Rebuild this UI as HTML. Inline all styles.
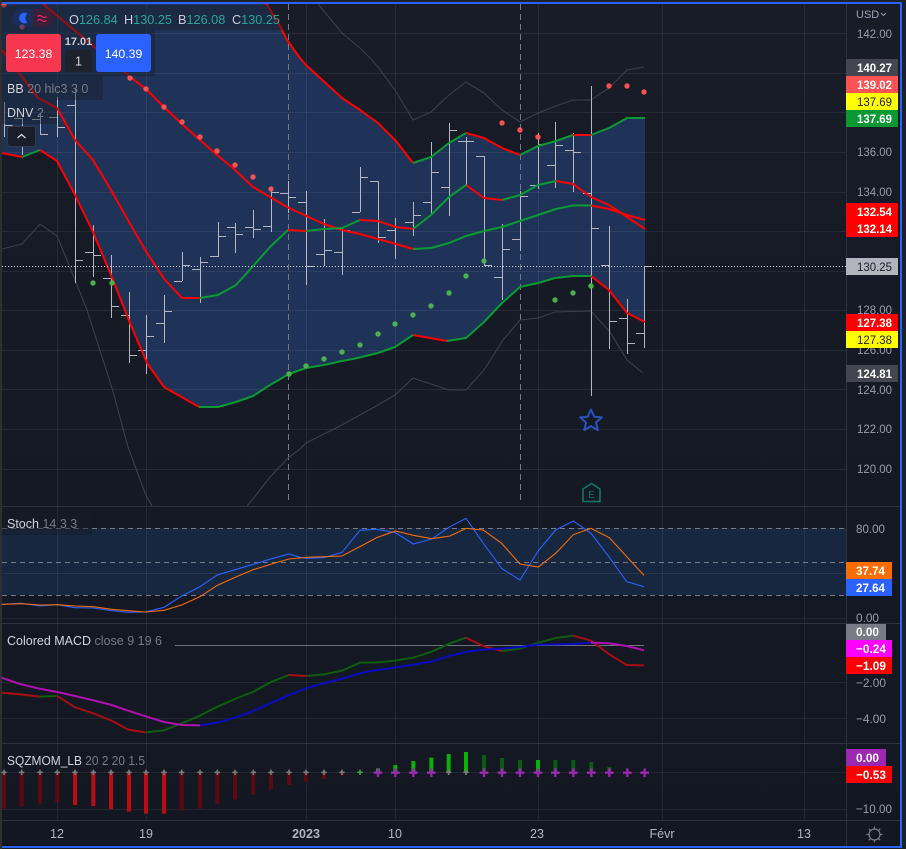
<!DOCTYPE html>
<html><head><meta charset="utf-8"><title>Chart</title>
<style>
html,body{margin:0;padding:0;background:#1d2026;width:906px;height:849px;overflow:hidden}
svg{display:block}
text{font-family:"Liberation Sans",sans-serif}
.ax{font-size:12.4px;fill:#9a9da6}
.lb{font-size:12.4px;fill:#fff;font-weight:bold}
.ti{font-size:12.5px;fill:#b2b5be;text-anchor:middle}
.le{font-size:12.5px;fill:#787b86}
.le tspan{fill:#d1d4dc}
</style></head><body>
<svg width="906" height="849" viewBox="0 0 906 849" xmlns="http://www.w3.org/2000/svg">
<defs><linearGradient id="bg" x1="0" y1="0" x2="0" y2="1"><stop offset="0" stop-color="#181c27"/><stop offset="1" stop-color="#131722"/></linearGradient></defs>
<rect x="0" y="0" width="906" height="849" fill="#1d2026"/>
<rect x="0" y="0" width="2" height="849" fill="#2d2f30"/>
<rect x="2" y="3" width="898" height="844" fill="url(#bg)"/>

<!-- main band fill -->
<polygon fill="#1f3359" points="2,4 266,4 280,26 287,40 300,58 306,65 342,98 360,110 378,123 396,141 413,163 431,157 449,143 466,133 484,138 502,148 520,155 538,146 556,141 573,135 591,135 609,128 627,118 645,118 645,322 627,313 609,290 591,276 573,276 555,278 538,283 520,287 502,303 484,322 466,338 447,341 413,335 395,347 378,353 353,359 342,361 324,365 306,368 289,374 270,385 253,396 236,402 218,407 199,407 164,387 147,363 130,323 111,275 93,232 75,195 57,161 40,150 22,157 2,153"/>
<!-- stoch band -->
<rect x="2" y="528" width="844" height="67" fill="#182740"/>

<!-- grid -->
<g stroke="#fff" stroke-opacity=".065" stroke-width="1" shape-rendering="crispEdges">
<path d="M2 33.5H846M2 73.5H846M2 112.5H846M2 152.5H846M2 192.5H846M2 231.5H846M2 271.5H846M2 310.5H846M2 350.5H846M2 389.5H846M2 429.5H846M2 469.5H846"/>
<path d="M2 573.5H846M2 618.5H846M2 682.5H846M2 718.5H846M2 772.5H846M2 809.5H846"/>
<path d="M57.5 4V820M146.5 4V820M306.5 4V820M395.5 4V820M538.5 4V820M662.5 4V820M804.5 4V820"/>
</g>
<!-- separators -->
<g stroke="#2e323d" stroke-width="1" shape-rendering="crispEdges">
<path d="M2 506.5H900M2 623.5H900M2 743.5H900M2 820.5H900M846.5 4V846"/>
</g>

<!-- session dashed verticals -->
<path d="M288.5 4V502M520.5 4V502" stroke="#787b86" stroke-width="1" stroke-dasharray="6 4" fill="none" shape-rendering="crispEdges"/>

<!-- outer thin gray lines -->
<g fill="none" stroke="#3c3f4a" stroke-width="1.1">
<polyline points="318,4 342,33 360,48 372,60 378,67 395,90 413,120 431,112 449,95 466,82 484,93 502,110 520,122 538,113 556,106 573,100 591,100 609,88 627,70 644,67"/>
<polyline points="2,249 22,244 40,224 57,236 67,260 87,310 112,388 128,447 145,493 152,506"/>
<polyline points="247,506 253,499 270,477 288,458 300,449 306,443 342,425 378,405 395,395 413,378 431,384 449,390 466,390 484,370 503,340 520,320 538,318 555,312 591,311 610,332 627,360 643,373"/>
</g>

<!-- bars -->
<path fill="none" stroke="#b4b7c0" stroke-width="1" shape-rendering="crispEdges" d="
M4.5 102V137M4.5 125.5h8
M22.5 118V155M14 118.5h8M22 128.5h8
M40.5 113V135M32 119.5h8M40 134.5h8
M57.5 97V137M49 117.5h8M57 127.5h8
M75.5 88V283M67 105.5h8M75 260.5h8
M93.5 225V277M85 252.5h8M93 255.5h8
M111.5 255V318M103 278.5h8M111 306.5h8
M129.5 292V363M121 315.5h8M129 355.5h8
M146.5 315V374M138 350.5h8M146 336.5h8
M164.5 295V343M156 323.5h8M164 311.5h8
M182.5 252V281M174 281.5h8M182 265.5h8
M200.5 257V303M192 269.5h8M200 262.5h8
M218.5 222V257M210 256.5h8M218 236.5h8
M235.5 223V253M227 227.5h8M235 234.5h8
M253.5 210V238M245 227.5h8M253 229.5h8
M271.5 187V232M263 226.5h8M271 192.5h8
M288.5 181V213M280 193.5h8M288 197.5h8
M306.5 191V285M298 202.5h8M306 266.5h8
M324.5 219V266M316 254.5h8M324 250.5h8
M342.5 228V275M334 252.5h8M342 230.5h8
M360.5 167V212M352 212.5h8M360 177.5h8
M378.5 181V243M370 181.5h8M378 237.5h8
M395.5 218V259M387 230.5h8M395 227.5h8
M413.5 202V236M405 222.5h8M413 215.5h8
M431.5 142V215M423 202.5h8M431 172.5h8
M449.5 123V216M441 187.5h8M449 130.5h8
M466.5 137V185M458 141.5h8M466 141.5h8
M484.5 156V266M476 156.5h8M484 265.5h8
M502.5 224V300M494 277.5h8M502 249.5h8
M520.5 191V251M512 239.5h8M520 196.5h8
M538.5 133V189M530 185.5h8M538 144.5h8
M555.5 122V188M547 165.5h8M555 145.5h8
M573.5 133V192M565 150.5h8M573 152.5h8
M591.5 86V396M583 193.5h8M591 228.5h8
M609.5 226V349M601 265.5h8M609 321.5h8
M627.5 299V354M619 318.5h8M627 343.5h8
M644.5 266V348M636 333.5h8M644 266.5h8"/>

<!-- coloured band lines -->
<g fill="none" stroke-width="2" stroke-linejoin="round">
<g stroke="#f00">
<polyline points="266,3 280,26 287,40 300,58 306,65 342,98 360,110 378,123 396,141 413,163"/>
<polyline points="466,133 484,138 502,148 520,155"/>
<polyline points="573,135 591,135"/>
<polyline points="43,4 128,75 147,90 165,108 183,125 200,140 217,155 233,168 253,187 270,197 287,207 300,213 324,224 342,230 360,234 378,239 396,244 413,249"/>
<polyline points="591,205.5 609,209 627,215 645,220"/>
<polyline points="2,50 38,98 57,108 75,140 93,160 111,190 129,222 147,253 165,280 182,298 200,298"/>
<polyline points="288,230 306,231"/>
<polyline points="360,220 378,221 396,227 413,229"/>
<polyline points="466,185 484,198 502,200"/>
<polyline points="556,181 573,184 591,197 609,205 627,217 645,229"/>
<polyline points="2,153 22,157"/>
<polyline points="40,150 57,161 75,195 93,232 111,275 130,323 147,363 164,387 199,407"/>
<polyline points="413,335 447,341"/>
<polyline points="591,276 609,290 627,313 645,322"/>
</g>
<g stroke="#0a9a32">
<polyline points="413,163 431,157 449,143 466,133"/>
<polyline points="520,155 538,146 556,141 573,135"/>
<polyline points="591,135 609,128 627,118 645,118"/>
<polyline points="413,249 431,248 449,243 466,236 484,231 502,227 520,221 538,215 556,209 573,205.5 591,205.5"/>
<polyline points="200,298 218,295 236,285 254,265 270,247 288,230"/>
<polyline points="306,231 324,229 342,228 360,220"/>
<polyline points="413,229 431,215 449,197 466,185"/>
<polyline points="502,200 520,195 538,185 556,181"/>
<polyline points="22,157 40,150"/>
<polyline points="199,407 218,407 236,402 253,396 270,385 289,374 306,368 324,365 342,361 353,359 378,353 395,347 413,335"/>
<polyline points="447,341 466,338 484,322 502,303 520,287 538,283 555,278 573,276 591,276"/>
</g>
</g>

<!-- dots -->
<g fill="#f55" opacity=".95">
<circle cx="4" cy="5" r="2.7"/><circle cx="130" cy="78" r="2.7"/><circle cx="146" cy="89" r="2.7"/><circle cx="164" cy="107" r="2.7"/><circle cx="182" cy="122" r="2.7"/><circle cx="200" cy="137" r="2.7"/><circle cx="217" cy="151" r="2.7"/><circle cx="235" cy="165" r="2.7"/><circle cx="253" cy="177" r="2.7"/><circle cx="271" cy="189" r="2.7"/><circle cx="502" cy="123" r="2.7"/><circle cx="520" cy="130" r="2.7"/><circle cx="538" cy="137" r="2.7"/><circle cx="609" cy="86" r="2.7"/><circle cx="627" cy="86" r="2.7"/><circle cx="644" cy="92" r="2.7"/>
</g>
<g fill="#4caf50">
<circle cx="93" cy="283" r="2.7"/><circle cx="112" cy="283" r="2.7"/><circle cx="289" cy="374" r="2.7"/><circle cx="306" cy="366" r="2.7"/><circle cx="324" cy="359" r="2.7"/><circle cx="342" cy="352" r="2.7"/><circle cx="360" cy="345" r="2.7"/><circle cx="378" cy="334" r="2.7"/><circle cx="395" cy="324" r="2.7"/><circle cx="413" cy="315" r="2.7"/><circle cx="431" cy="306" r="2.7"/><circle cx="449" cy="293" r="2.7"/><circle cx="466" cy="276" r="2.7"/><circle cx="484" cy="261" r="2.7"/><circle cx="555" cy="300" r="2.7"/><circle cx="573" cy="293" r="2.7"/><circle cx="591" cy="286" r="2.7"/>
</g>

<!-- last price dotted -->
<path d="M2 266.5H846" stroke="#d1d4dc" stroke-width="1" stroke-dasharray="1 2" shape-rendering="crispEdges"/>

<!-- star and E -->
<path d="M591 409.5l3.2 7.2 7.6.7-5.8 5.1 1.8 7.6-6.8-4-6.8 4 1.8-7.6-5.8-5.1 7.6-.7z" fill="none" stroke="#2a52be" stroke-width="2" stroke-linejoin="round"/>
<path d="M591.5 483.5l8.5 5.5v12.5h-17V489z" fill="none" stroke="#0b7a6a" stroke-width="1.6" stroke-linejoin="round"/>
<text x="591.5" y="498" font-size="10" fill="#0b7a6a" text-anchor="middle">E</text>

<!-- stoch -->
<path d="M2 528.5H846M2 562.5H846M2 595.5H846" stroke="#787b86" stroke-width="1" stroke-dasharray="5 4" shape-rendering="crispEdges" fill="none"/>
<g transform="translate(0,500) scale(.33333)" fill="none" stroke-width="3.3">
<polyline stroke="#2962ff" points="5,313 65,310 120,318 172,314 225,323 280,324 335,332 385,337 437,336 492,322 545,288 600,260 652,225 705,209 760,193 815,176 867,162 900,172 920,175 972,173 1026,157 1080,91 1130,88 1186,98 1240,132 1295,117 1350,80 1398,55 1450,130 1505,205 1560,240 1615,152 1667,90 1720,63 1773,100 1828,172 1880,245 1932,260"/>
<polyline stroke="#f56c0a" points="5,313 65,311 120,315 172,314 225,318 280,320 335,328 385,332 437,336 492,331 545,315 600,290 652,256 705,232 760,209 815,192 867,177 920,172 972,170 1026,168 1080,140 1130,113 1186,93 1240,106 1295,116 1350,108 1398,85 1450,90 1505,130 1560,192 1615,201 1667,160 1720,104 1773,85 1828,113 1880,170 1932,226"/>
</g>

<!-- MACD -->
<path d="M175 645.5H644" stroke="#6f727d" stroke-width="1" shape-rendering="crispEdges"/>
<g transform="translate(0,500) scale(.33333)" fill="none" stroke-width="6" stroke-linejoin="round">
<g stroke="#0d5f0d">
<polyline points="118,590 172,588"/>
<polyline points="437,697 492,691 545,670 600,647 652,620 705,597 760,575 815,545 867,525"/>
<polyline points="920,528 972,523 1026,512 1080,488 1130,487 1186,482 1240,473 1295,455 1350,430 1398,413"/>
<polyline points="1505,453 1560,446 1615,428 1667,414 1720,407"/>
</g>
<g stroke="#a80d14">
<polyline points="5,578 60,583 118,590"/>
<polyline points="172,588 225,622 280,640 335,662 385,689 437,697"/>
<polyline points="867,525 920,528"/>
<polyline points="1398,413 1450,438 1505,453"/>
<polyline points="1720,407 1773,422 1828,463 1880,495 1932,496"/>
</g>
<g stroke="#0a0ac4">
<polyline points="600,676 652,668 705,653 760,633 815,608 867,585 920,564 972,550 1026,536 1080,520 1130,510 1186,503 1240,494 1295,485 1350,467 1398,456 1450,449 1505,446 1560,441 1615,434 1667,433 1720,432 1773,428"/>
</g>
<g stroke="#b010b0">
<polyline points="5,533 60,552 118,566 172,576 225,588 280,601 335,615 385,632 437,649 492,666 545,675 600,676"/>
<polyline points="1773,428 1828,430 1880,438 1932,451"/>
</g>
</g>

<!-- squeeze histogram -->
<g transform="translate(0,500) scale(.33333)" fill="none">
<path stroke-width="12" stroke="#5c0a10" d="M12 817V926M65 817V920M120 817V911M172 817V908M545 817V932M600 817V926M652 817V911M705 817V899M760 817V885M813 817V869M867 817V855M918 817V845M972 817V837M1026 817V827"/>
<path stroke-width="12" stroke="#b80d12" d="M225 817V915M280 817V918M333 817V927M387 817V935M438 817V941M492 817V941"/>
<path stroke-width="12" stroke="#0bb00b" d="M1134 817V805M1186 817V795M1240 817V783M1294 817V773M1346 817V762M1398 817V756M1614 817V780"/>
<path stroke-width="12" stroke="#0a5c14" d="M1452 817V765M1506 817V774M1560 817V780M1666 817V780M1720 817V780M1774 817V786M1828 817V801"/>
<path stroke-width="5" stroke="#7a7a7a" d="M12 809V825M4 817H20M65 809V825M57 817H73M120 809V825M112 817H128M172 809V825M164 817H180M225 809V825M217 817H233M280 809V825M272 817H288M333 809V825M325 817H341M387 809V825M379 817H395M438 809V825M430 817H446M492 809V825M484 817H500M545 809V825M537 817H553M600 809V825M592 817H608M652 809V825M644 817H660M705 809V825M697 817H713M760 809V825M752 817H768M813 809V825M805 817H821M867 809V825M859 817H875M918 809V825M910 817H926M972 809V825M964 817H980M1026 809V825M1018 817H1034M1346 809V825M1338 817H1354M1398 809V825M1390 817H1406"/>
<path stroke-width="5" stroke="#43a047" d="M1080 809V825M1072 817H1088"/>
<path stroke-width="7" stroke="#9c27b0" d="M1134 805V831M1121 818H1147M1186 805V831M1173 818H1199M1240 805V831M1227 818H1253M1294 805V831M1281 818H1307M1452 805V831M1439 818H1465M1506 805V831M1493 818H1519M1560 805V831M1547 818H1573M1614 805V831M1601 818H1627M1666 805V831M1653 818H1679M1720 805V831M1707 818H1733M1774 805V831M1761 818H1787M1828 805V831M1815 818H1841M1882 805V831M1869 818H1895M1934 805V831M1921 818H1947"/>
</g>

<!-- legend backgrounds -->
<g fill="#181c27" fill-opacity=".42">
<rect x="2" y="5" width="284" height="25"/>
<rect x="2" y="30" width="153" height="46"/>
<rect x="2" y="76" width="101" height="24"/>
<rect x="2" y="100" width="55" height="24"/>
<rect x="2" y="513" width="90" height="22"/>
</g>

<!-- toggle -->
<path d="M33 9H22a9 9 0 0 0 0 18H33z" fill="#1a2d5b"/>
<path d="M33 9H44a9 9 0 0 1 0 18H33z" fill="#3a2138"/>
<path d="M27.5 13.5a5.4 5.4 0 1 0 0 9a6 6 0 0 1 0-9z" fill="#2962ff"/>
<path d="M37.5 16.5q2.2-2 4.5 0t4.5 0M37.5 20.5q2.2-2 4.5 0t4.5 0" fill="none" stroke="#e91e63" stroke-width="1.3"/>
<circle cx="22" cy="27" r="2.6" fill="#f55" opacity=".4"/>

<!-- OHLC -->
<g font-size="12.7">
<text x="69" y="24" fill="#c9ccd4">O<tspan fill="#26a69a">126.84</tspan></text>
<text x="124" y="24" fill="#c9ccd4">H<tspan fill="#26a69a">130.25</tspan></text>
<text x="178" y="24" fill="#c9ccd4">B<tspan fill="#26a69a">126.08</tspan></text>
<text x="232" y="24" fill="#c9ccd4">C<tspan fill="#26a69a">130.25</tspan></text>
</g>

<!-- buy/sell -->
<rect x="6" y="34" width="55" height="38" rx="3" fill="#f7374f"/>
<text x="33.5" y="58" font-size="12.3" fill="#fff" text-anchor="middle">123.38</text>
<rect x="96" y="34" width="55" height="38" rx="3" fill="#2962ff"/>
<text x="123.5" y="58" font-size="12.3" fill="#fff" text-anchor="middle">140.39</text>
<text x="78.5" y="45" font-size="11" fill="#c9ccd4" font-weight="bold" text-anchor="middle">17.01</text>
<rect x="65" y="50" width="27" height="22" rx="3" fill="#1e222d"/>
<text x="78.5" y="65.5" font-size="12.5" fill="#d1d4dc" text-anchor="middle">1</text>

<!-- legends -->
<text class="le" x="7" y="93"><tspan>BB</tspan> 20 hlc3 3 0</text>
<text class="le" x="7" y="117"><tspan>DNV</tspan> 2</text>
<rect x="7.5" y="126.5" width="28" height="20" rx="3" fill="#1a1e2a" stroke="#363a45"/>
<path d="M17.5 138l4-3.5 4 3.5" fill="none" stroke="#d1d4dc" stroke-width="1.3"/>
<text class="le" x="7" y="528"><tspan>Stoch</tspan> 14 3 3</text>
<text class="le" x="7" y="645"><tspan>Colored MACD</tspan> close 9 19 6</text>
<text class="le" x="7" y="765" textLength="138" lengthAdjust="spacingAndGlyphs"><tspan>SQZMOM_LB</tspan> 20 2 20 1.5</text>

<!-- axis -->
<text x="856" y="18" font-size="11" fill="#9aa3b5">USD</text>
<path d="M881 13l2.5 2.5 2.5-2.5" fill="none" stroke="#9598a1" stroke-width="1"/>
<g>
<text class="ax" x="857" y="38" textLength="35" lengthAdjust="spacingAndGlyphs">142.00</text>
<text class="ax" x="857" y="156" textLength="35" lengthAdjust="spacingAndGlyphs">136.00</text>
<text class="ax" x="857" y="196" textLength="35" lengthAdjust="spacingAndGlyphs">134.00</text>
<text class="ax" x="857" y="314" textLength="35" lengthAdjust="spacingAndGlyphs">128.00</text>
<text class="ax" x="857" y="354" textLength="35" lengthAdjust="spacingAndGlyphs">126.00</text>
<text class="ax" x="857" y="394" textLength="35" lengthAdjust="spacingAndGlyphs">124.00</text>
<text class="ax" x="857" y="433" textLength="35" lengthAdjust="spacingAndGlyphs">122.00</text>
<text class="ax" x="857" y="473" textLength="35" lengthAdjust="spacingAndGlyphs">120.00</text>
<text class="ax" x="856" y="533" textLength="29" lengthAdjust="spacingAndGlyphs">80.00</text>
<text class="ax" x="856" y="622" textLength="23" lengthAdjust="spacingAndGlyphs">0.00</text>
<text class="ax" x="856" y="687" textLength="30" lengthAdjust="spacingAndGlyphs">−2.00</text>
<text class="ax" x="856" y="723" textLength="30" lengthAdjust="spacingAndGlyphs">−4.00</text>
<text class="ax" x="856" y="813" textLength="36" lengthAdjust="spacingAndGlyphs">−10.00</text>
</g>

<!-- axis labels -->
<rect x="846" y="59" width="52" height="17" fill="#434651"/><text class="lb" x="857" y="72" textLength="35" lengthAdjust="spacingAndGlyphs">140.27</text>
<rect x="846" y="76" width="52" height="17" fill="#ff5252"/><text class="lb" x="857" y="89" textLength="35" lengthAdjust="spacingAndGlyphs">139.02</text>
<rect x="846" y="93" width="52" height="17" fill="#ff0"/><text class="lb" x="857" y="106" style="fill:#222;font-weight:normal" textLength="35" lengthAdjust="spacingAndGlyphs">137.69</text>
<rect x="846" y="110" width="52" height="17" fill="#089933"/><text class="lb" x="857" y="123" textLength="35" lengthAdjust="spacingAndGlyphs">137.69</text>
<rect x="846" y="203" width="52" height="17" fill="#f00"/><text class="lb" x="857" y="216" textLength="35" lengthAdjust="spacingAndGlyphs">132.54</text>
<rect x="846" y="220" width="52" height="17" fill="#f00"/><text class="lb" x="857" y="233" textLength="35" lengthAdjust="spacingAndGlyphs">132.14</text>
<rect x="846" y="258" width="52" height="17" fill="#b2b5be"/><text class="lb" x="857" y="271" style="fill:#1a1e2a;font-weight:normal" textLength="35" lengthAdjust="spacingAndGlyphs">130.25</text>
<rect x="846" y="314" width="52" height="17" fill="#f00"/><text class="lb" x="857" y="327" textLength="35" lengthAdjust="spacingAndGlyphs">127.38</text>
<rect x="846" y="331" width="52" height="17" fill="#ff0"/><text class="lb" x="857" y="344" style="fill:#222;font-weight:normal" textLength="35" lengthAdjust="spacingAndGlyphs">127.38</text>
<rect x="846" y="365" width="52" height="17" fill="#434651"/><text class="lb" x="857" y="378" textLength="35" lengthAdjust="spacingAndGlyphs">124.81</text>

<rect x="846" y="562" width="46" height="17" fill="#ff6d00"/><text class="lb" x="856" y="575" textLength="29" lengthAdjust="spacingAndGlyphs">37.74</text>
<rect x="846" y="579" width="46" height="17" fill="#2962ff"/><text class="lb" x="856" y="592" textLength="29" lengthAdjust="spacingAndGlyphs">27.64</text>
<rect x="846" y="624" width="40" height="16" fill="#787b86"/><text class="lb" x="856" y="636" textLength="23" lengthAdjust="spacingAndGlyphs">0.00</text>
<rect x="846" y="640" width="46" height="17" fill="#f0f"/><text class="lb" x="856" y="653" textLength="30" lengthAdjust="spacingAndGlyphs">−0.24</text>
<rect x="846" y="657" width="46" height="17" fill="#f00"/><text class="lb" x="856" y="670" textLength="30" lengthAdjust="spacingAndGlyphs">−1.09</text>
<rect x="846" y="749" width="40" height="17" fill="#9c27b0"/><text class="lb" x="856" y="762" textLength="23" lengthAdjust="spacingAndGlyphs">0.00</text>
<rect x="846" y="766" width="46" height="17" fill="#f00"/><text class="lb" x="856" y="779" textLength="30" lengthAdjust="spacingAndGlyphs">−0.53</text>

<!-- time axis -->
<text class="ti" x="57" y="838">12</text>
<text class="ti" x="146" y="838">19</text>
<text class="ti" x="306" y="838" font-weight="bold">2023</text>
<text class="ti" x="395" y="838">10</text>
<text class="ti" x="537" y="838">23</text>
<text class="ti" x="662" y="838">Févr</text>
<text class="ti" x="804" y="838">13</text>

<!-- settings sun -->
<g fill="none" stroke="#787b86" stroke-width="1.2">
<circle cx="874.5" cy="834.5" r="5.5"/>
<path d="M874.5 826.5v2.5M874.5 840v2.5M866.5 834.5h2.5M880 834.5h2.5M868.8 828.8l1.8 1.8M878.4 838.4l1.8 1.8M880.2 828.8l-1.8 1.8M870.6 838.4l-1.8 1.8"/>
</g>

<!-- blue border -->
<rect x="2" y="2" width="900" height="2" fill="#2962ff"/>
<rect x="900" y="2" width="2" height="846" fill="#2962ff"/>
<rect x="2" y="846" width="900" height="2" fill="#2962ff"/>
</svg>
</body></html>
